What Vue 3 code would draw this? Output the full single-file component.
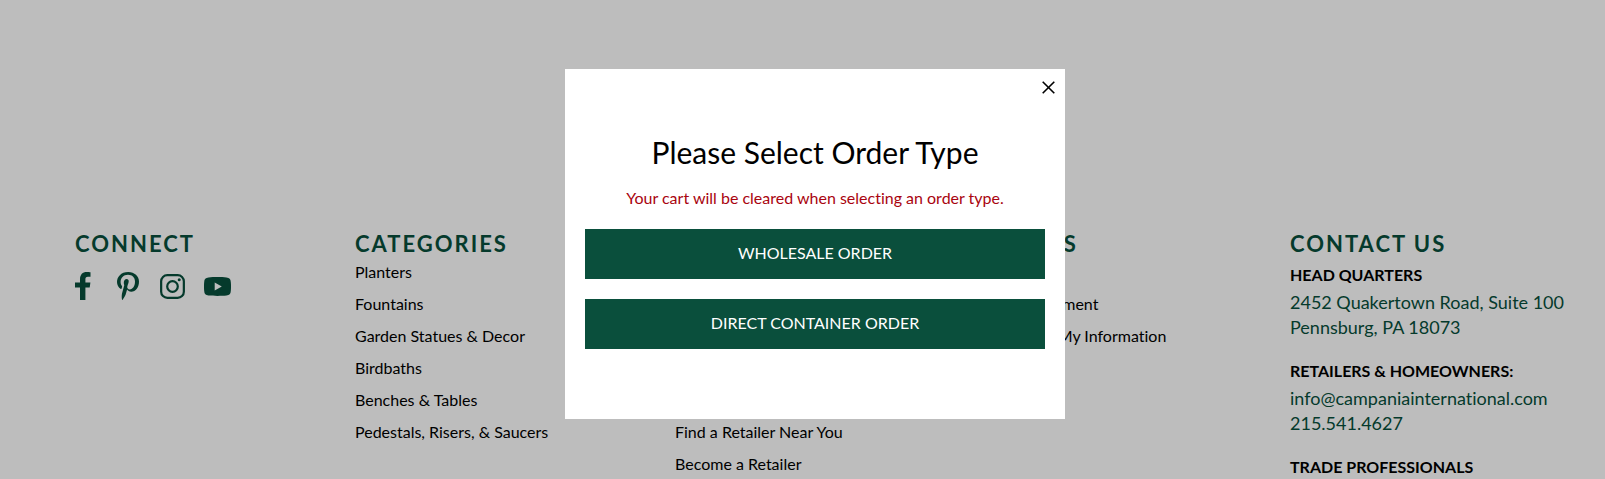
<script setup>
import { ref } from 'vue'

const open = ref(true)

const linkColumns = [
  {
    title: 'Categories',
    links: ['Planters', 'Fountains', 'Garden Statues & Decor', 'Birdbaths', 'Benches & Tables', 'Pedestals, Risers, & Saucers'],
  },
  {
    title: 'About',
    links: ['About Us', 'Contact Us', 'FAQ', 'Catalogs', 'Product Care', 'Find a Retailer Near You', 'Become a Retailer'],
  },
  {
    title: 'Terms',
    links: ['Privacy', 'Our Statement', 'Disclose My Information'],
  },
]

const contacts = [
  { title: 'Head Quarters', lines: [{ text: '2452 Quakertown Road, Suite 100' }, { text: 'Pennsburg, PA 18073' }] },
  {
    title: 'Retailers & Homeowners:',
    lines: [
      { text: 'info@campaniainternational.com', href: 'mailto:info@campaniainternational.com' },
      { text: '215.541.4627', href: 'tel:2155414627' },
    ],
  },
  { title: 'Trade Professionals', lines: [] },
]
</script>

<template>
  <div class="page">
    <footer class="footer">
      <section>
        <h2>Connect</h2>
        <div class="social">
          <a href="#facebook" aria-label="Facebook">
            <svg width="16" height="28" viewBox="0 0 16 28"><path d="M5 28V15.500H0v-5h5V7.200C5 2.600 7.600 0 11.700 0c1.600 0 3 .1 3.800.3v4.400h-2.600c-2 0-2.500 1-2.500 2.500v3.300h5l-.7 5h-4.300V28z" /></svg>
          </a>
          <a href="#pinterest" aria-label="Pinterest">
            <svg width="22" height="28" viewBox="0 0 22 28"><path d="M11.300 0C3.800 0 0 5 0 10c0 2.800 1.400 5.800 3.800 6.900.5.200.7.100.8-.3l.5-1.900c.1-.3 0-.5-.2-.8C4.100 13 3.600 11.500 3.600 10c0-3.700 2.700-7.200 7.400-7.200 4.400 0 7 2.900 7 6.800 0 4.600-2.300 7.800-5.200 7.800-1.700 0-2.900-1.300-2.500-2.900.5-1.900 1.400-3.900 1.400-5.300 0-1.200-.7-2.200-2-2.200-1.600 0-2.900 1.600-2.900 3.800 0 1.400.5 2.300.5 2.300L5 21.500c-.5 2.200-.2 5.100 0 6.100.1.400.5.400.7.100.3-.4 2.400-3.300 3.100-5.700l1.300-4.400c.6 1.200 2.300 2.200 4.100 2.200C18.800 19.800 22 15.400 22 9.500 22 4.300 17.500 0 11.300 0z" /></svg>
          </a>
          <a href="#instagram" aria-label="Instagram">
            <svg width="25" height="25" viewBox="0 0 25 25"><rect x="1.150" y="1.150" width="22.700" height="22.700" rx="6.200" fill="none" stroke="currentColor" stroke-width="2.200" /><circle cx="12.500" cy="12.500" r="5.300" fill="none" stroke="currentColor" stroke-width="2.200" /><circle cx="19.200" cy="5.800" r="1.500" /></svg>
          </a>
          <a href="#youtube" aria-label="YouTube">
            <svg width="27" height="19" viewBox="0 0 27 19"><path fill-rule="evenodd" d="M4.500.4c5-.5 13-.5 18 0 3 .3 4.100 1.500 4.300 4.500.3 3 .3 6.200 0 9.200-.2 3-1.300 4.200-4.300 4.500-5 .5-13 .5-18 0-3-.3-4.100-1.500-4.300-4.500-.3-3-.3-6.200 0-9.200C.4 1.900 1.500.7 4.500.4zM10.700 5.400v8.200l7.100-4.100z" /></svg>
          </a>
        </div>
      </section>

      <nav v-for="col in linkColumns" :key="col.title" :aria-label="col.title">
        <h2>{{ col.title }}</h2>
        <ul>
          <li v-for="link in col.links" :key="link"><a href="#">{{ link }}</a></li>
        </ul>
      </nav>

      <section>
        <h2>Contact Us</h2>
        <div v-for="c in contacts" :key="c.title" class="contact">
          <h3>{{ c.title }}</h3>
          <p v-for="line in c.lines" :key="line.text">
            <a v-if="line.href" :href="line.href">{{ line.text }}</a>
            <template v-else>{{ line.text }}</template>
          </p>
        </div>
      </section>
    </footer>

    <div v-if="open" class="overlay">
      <div class="modal" role="dialog" aria-modal="true" aria-labelledby="order-title">
        <button class="close" type="button" aria-label="Close" @click="open = false">
          <svg width="13" height="13" viewBox="0 0 13 13"><path d="M.7.7l11.600 11.600M12.300.7L.7 12.300" fill="none" stroke="currentColor" stroke-width="1.600" /></svg>
        </button>
        <h1 id="order-title">Please Select Order Type</h1>
        <p class="warning">Your cart will be cleared when selecting an order type.</p>
        <button class="choice" type="button">Wholesale Order</button>
        <button class="choice" type="button">Direct Container Order</button>
      </div>
    </div>
  </div>
</template>

<style>
body {
  background: #bdbdbd;
}
</style>

<style scoped>
.page {
  height: 100vh;
  overflow: hidden;
  box-sizing: border-box;
  padding-top: 230px;
  background: #bdbdbd;
  color: #000;
  font-family: Lato, "Liberation Sans", sans-serif;
  font-size: 16px;
  font-variant-ligatures: none;
}

.footer {
  display: grid;
  grid-template-columns: 56fr 64fr 64fr 59fr 63fr;
  padding-left: 75px;
  white-space: nowrap;
}

.footer > * {
  min-width: 0;
}

h1,
h2,
h3,
p,
ul {
  margin: 0;
  padding: 0;
}

h2 {
  color: #053a2c;
  font-size: 22px;
  line-height: 28px;
  font-weight: 700;
  letter-spacing: 2px;
  text-transform: uppercase;
}

a {
  color: inherit;
  text-decoration: none;
}

ul {
  list-style: none;
}

li {
  height: 32px;
  line-height: 28px;
}

.social {
  display: flex;
  align-items: center;
  gap: 18px;
  margin-top: 14px;
  color: #053a2c;
}

.social a {
  display: flex;
  justify-content: center;
  min-width: 27px;
}

.social a:first-child {
  justify-content: flex-start;
  min-width: 21px;
}

.social svg {
  display: block;
  fill: currentColor;
}

.contact {
  margin-bottom: 14px;
  color: #053a2c;
  font-size: 18px;
  line-height: 25px;
}

.contact h3 {
  padding: 5px 0 3px;
  color: #000;
  font-size: 16px;
  line-height: 24px;
  font-weight: 700;
  text-transform: uppercase;
}

.overlay {
  position: fixed;
  inset: 0;
  display: flex;
  align-items: center;
  justify-content: center;
  padding: 9px 0 0 25px;
}

.modal {
  position: relative;
  box-sizing: border-box;
  width: 500px;
  min-height: 350px;
  padding: 62px 20px 0;
  background: #fff;
  text-align: center;
}

.close {
  position: absolute;
  top: 7px;
  right: 5px;
  display: flex;
  padding: 5px;
  border: 0;
  background: none;
  color: #000;
}

h1 {
  font-size: 30px;
  line-height: 42px;
  font-weight: 400;
}

.warning {
  margin: 13px 0 19px;
  color: #a9040f;
  line-height: 24px;
}

.choice {
  display: block;
  width: 100%;
  height: 50px;
  margin-bottom: 20px;
  padding: 0 0 4px;
  border: 0;
  background: #0a4f3c;
  color: #fff;
  font-family: inherit;
  font-size: 16px;
  text-transform: uppercase;
}
</style>
